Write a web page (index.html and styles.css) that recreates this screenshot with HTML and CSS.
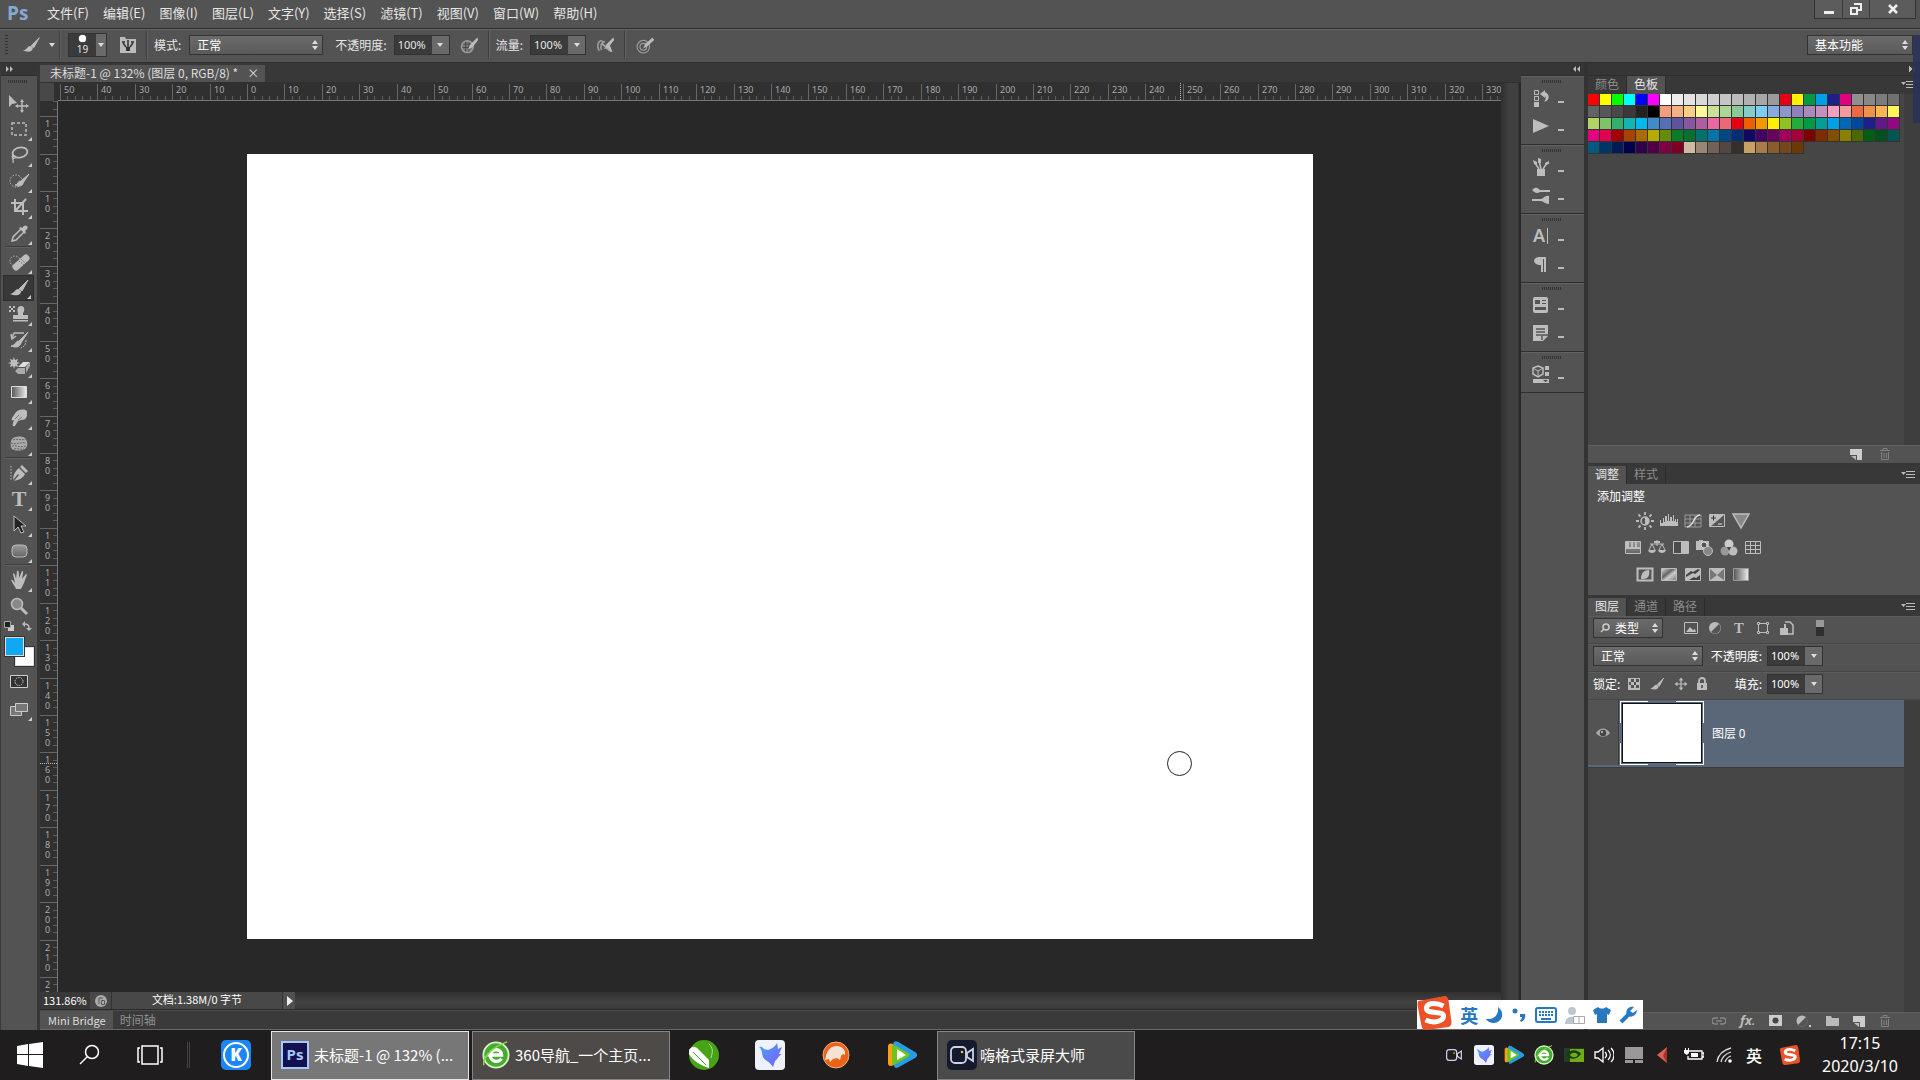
FILE: index.html
```html
<!DOCTYPE html>
<html lang="zh-CN">
<head>
<meta charset="utf-8">
<title>未标题-1 @ 132% (图层 0, RGB/8) *</title>
<link rel="stylesheet" href="styles.css">
</head>
<body>
<svg class="defs" aria-hidden="true">
  <defs>
    <linearGradient id="gLR"><stop offset="0" stop-color="#555"/><stop offset="1" stop-color="#eee"/></linearGradient>
    <linearGradient id="gTB" x2="0" y2="1"><stop offset="0" stop-color="#999"/><stop offset="1" stop-color="#666"/></linearGradient>
    <linearGradient id="gDiag" x2="1" y2="1"><stop offset="0" stop-color="#ddd"/><stop offset=".4" stop-color="#666"/><stop offset=".6" stop-color="#ccc"/><stop offset="1" stop-color="#777"/></linearGradient>
    <linearGradient id="gBird" x2="1" y2="1"><stop offset="0" stop-color="#4aa3ff"/><stop offset="1" stop-color="#7d5cf0"/></linearGradient>
  </defs>
  <symbol id="brush" viewBox="0 0 24 24"><path d="M21 4 12 13l3 2z" fill="currentColor" stroke="currentColor" stroke-linejoin="round"/><path d="M11 13c-3 0-3 4-8 5 5 2 11 2 11-3z" fill="currentColor"/></symbol>
  <symbol id="move" viewBox="0 0 24 24"><path d="M2 4v12l3-3 5-1z" fill="currentColor"/><path d="M15 10v10M10 15h10" stroke="currentColor" stroke-width="1.5"/><path d="m15 8 2 3h-4zM15 22l2-3h-4zM8 15l3-2v4zM22 15l-3-2v4z" fill="currentColor"/></symbol>
  <symbol id="arrow4" viewBox="0 0 24 24"><path d="M12 5v14M5 12h14" stroke="currentColor" stroke-width="2"/><path d="m12 1 4 5H8zM12 23l4-5H8zM1 12l5-4v8zM23 12l-5-4v8z" fill="currentColor"/></symbol>
  <symbol id="marquee" viewBox="0 0 24 24"><path d="M5 6h14v12H5z" fill="none" stroke="currentColor" stroke-width="1.5" stroke-dasharray="3 2"/></symbol>
  <symbol id="lasso" viewBox="0 0 24 24"><ellipse cx="13" cy="9.500" rx="7.500" ry="5" transform="rotate(-12 13 9.500)" fill="none" stroke="currentColor" stroke-width="1.800"/><path d="M6 12c-2 2 0 4 2 3s-1-3-2-1 1 4 0 6" fill="none" stroke="currentColor" stroke-width="1.300"/></symbol>
  <symbol id="quick" viewBox="0 0 24 24"><circle cx="9" cy="12" r="6" fill="none" stroke="currentColor" stroke-dasharray="1.500 1.500"/><path d="m22 5-8 7 2 2zM13 12c-2 0-2 4-5 4 4 2 8 1 8-2z" fill="currentColor" stroke="currentColor"/></symbol>
  <symbol id="crop" viewBox="0 0 24 24"><path d="M8 4v12h13M4 8h12v12M19 4 9 15" fill="none" stroke="currentColor" stroke-width="2"/></symbol>
  <symbol id="dropper" viewBox="0 0 24 24"><path d="m14 8-8 8-1 4 4-1 8-8" fill="none" stroke="currentColor" stroke-width="1.500"/><path d="m12 7 6 6 1-2-1-1c3-2 3-4 2-5s-3-1-5 2l-1-1z" fill="currentColor"/></symbol>
  <symbol id="heal" viewBox="0 0 24 24"><circle cx="8" cy="11" r="5" fill="none" stroke="currentColor" stroke-dasharray="1.500 1.500"/><rect x="4" y="9" width="20" height="7" rx="3" transform="rotate(-42 14 12.500)" fill="currentColor"/><path d="m12 11 5 4M14 9l4 4" stroke="#555" stroke-dasharray="1 1.500"/></symbol>
  <symbol id="stamp" viewBox="0 0 24 24"><path d="M11 11c-1-2-1-7 3-7s4 5 2 7v2h5v4H6v-4h5zM6 18h15v1.500H6z" fill="currentColor"/><path d="M2 4h2v2H2zM6 4h2v2H6zM4 6h2v2H4zM2 8h2v2H2zM6 8h2v2H6z" fill="currentColor"/></symbol>
  <symbol id="history" viewBox="0 0 24 24"><path d="m21 4-9 9 2 2zM11 13c-2 0-2 4-7 5 5 2 9 1 10-3z" fill="currentColor" stroke="currentColor"/><path d="M17 5H7l-2 5M4 6l1 5 4-3" fill="none" stroke="currentColor" stroke-width="1.500"/><path d="M19 12c0 4-1 6-5 8" stroke="currentColor" fill="none" stroke-dasharray="2 1"/></symbol>
  <symbol id="eraser" viewBox="0 0 24 24"><path d="m11 13 5-5h7l-5 5z" fill="#ddd"/><path d="M11 14h7v6h-7l-3-3zM19 13l4-5v4l-4 7z" fill="#aaa"/><path d="m7 3 1 3 3-1-1 3 3 1-3 1 1 3-3-1-1 3-1-3-3 1 1-3-3-1 3-1-1-3 3 1z" fill="currentColor"/></symbol>
  <symbol id="gradient" viewBox="0 0 24 24"><path d="M4.500 6.500h15v11h-15z" fill="url(#gLR)" stroke="#ddd"/></symbol>
  <symbol id="smudge" viewBox="0 0 24 24"><path d="M9 6c4-3 8-3 11-1v5c-1 3-3 4-6 4l-3 1-3 5c-2 1-3-1-2-3l1-3c-2 1-3 0-2-2z" fill="currentColor"/><path d="m8 13 4-4M11 14l4-3" stroke="#777"/></symbol>
  <symbol id="sponge" viewBox="0 0 24 24"><path d="M6 6c4-2 9-2 12 0 3 3 3 9 0 11-4 2-10 2-13 0-2-3-2-8 1-11z" fill="#aaa"/><path d="M6 8c4-2 8 1 13-1M4 11c4 2 8-1 15 0M5 14c4-1 9 2 14 0M7 17c4-1 6 1 10 0" fill="none" stroke="#666" stroke-dasharray="2 1"/></symbol>
  <symbol id="pen" viewBox="0 0 24 24"><path d="m15 4 6 6-2 2-6-6zM12 7l6 6c-2 4-6 6-11 7l5-6-1-1-5 6c0-5 2-9 6-12z" fill="currentColor"/><path d="M4 5v14" stroke="currentColor" stroke-dasharray="1.500 1.500"/></symbol>
  <symbol id="type" viewBox="0 0 24 24"><text x="12" y="19" text-anchor="middle" font-family="Liberation Serif, serif" font-weight="bold" font-size="22" fill="currentColor">T</text></symbol>
  <symbol id="pathsel" viewBox="0 0 24 24"><path d="M7 3v15l4-4 3 6 3-1-3-6h5z" fill="#222" stroke="#bbb"/></symbol>
  <symbol id="rrect" viewBox="0 0 24 24"><rect x="5" y="6" width="15" height="12" rx="4" fill="url(#gTB)" stroke="#bbb"/></symbol>
  <symbol id="hand" viewBox="0 0 24 24"><path d="M9 21c-1-3-4-6-5-9 1-1 2 0 4 3L6 6c1-2 2 0 3 5l1-8c2-1 2 1 2 7l3-7c2 0 1 2 0 8l4-5c2 0 0 3-1 6-1 4-3 6-4 9z" fill="currentColor"/></symbol>
  <symbol id="zoom" viewBox="0 0 24 24"><circle cx="10" cy="10" r="5.500" fill="#888" stroke="#bbb" stroke-width="1.500"/><path d="m14 14 6 6" stroke="#bbb" stroke-width="3"/></symbol>
  <symbol id="mask" viewBox="0 0 24 24"><path d="M3.500 6.500h17v12h-17z" fill="#333" stroke="#ccc"/><circle cx="12" cy="12.500" r="4" fill="none" stroke="#ccc" stroke-dasharray="1.500 1"/></symbol>
  <symbol id="screens" viewBox="0 0 24 24"><path d="M3.500 9.500h11v9h-11z" fill="#777" stroke="#ccc"/><path d="M8.500 6.500h12v8h-12z" fill="#777" stroke="#ccc"/></symbol>
  <symbol id="press" viewBox="0 0 24 24"><circle cx="10" cy="14" r="7" fill="#777" stroke="#999" stroke-width="2"/><path d="M5 11h10M4 15h11M8 8v12M12 9v11" stroke="#444"/><path d="m22 3-9 9-2 5 5-2 7-9z" fill="#bbb"/></symbol>
  <symbol id="airbrush" viewBox="0 0 24 24"><path d="M9 7C3 6 2 14 5 19M12 8c-5 0-6 7-4 10" fill="none" stroke="#999" stroke-width="2"/><path d="m22 3-9 9-2 5 5-2 7-9zM14 14l4 6h3l-3-7" fill="#bbb"/><path d="m8 10 10 9" stroke="#aaa" stroke-width="2"/></symbol>
  <symbol id="target" viewBox="0 0 24 24"><circle cx="10" cy="14" r="7.500" fill="none" stroke="#999" stroke-width="1.500"/><circle cx="10" cy="14" r="4" fill="none" stroke="#999" stroke-width="1.500"/><path d="m21 3-9 8-2 5 4-2 9-8z" fill="#bbb"/></symbol>
  <symbol id="brushpanel" viewBox="0 0 18 18"><path d="M1 1h5l1 2h10v14H1z" fill="#bbb"/><path d="M7 11h4v4H7z" fill="#333"/><path d="m4 7 3 4M9 6v5M14 7l-3 4M3 6h3M12 6h3M8 5h2" stroke="#333" stroke-width="1.500" fill="none"/></symbol>
  <symbol id="d-history" viewBox="0 0 18 18"><path d="M2.500 1.500h4v4h-4zM2.500 7.500h4v4h-4z" fill="none" stroke="currentColor"/><path d="M2 13h5v5H2z" fill="currentColor"/><path d="M8 5l5-4v2c6 3 4 9-1 10 2-2 2-5 1-6v2z" fill="currentColor"/></symbol>
  <symbol id="d-play" viewBox="0 0 18 18"><path d="M1 2v14l16-7z" fill="currentColor"/></symbol>
  <symbol id="d-brushes" viewBox="0 0 18 18"><path d="M5 11h8v7H5z" fill="currentColor"/><path d="M7 11 3 5M9 11 7 3M11 11l4-6" stroke="currentColor" stroke-width="1.500"/><path d="M1 2l4 2v3L2 6zM6 0l3 1v4H6zM13 5l4-2v3l-4 1z" fill="currentColor"/></symbol>
  <symbol id="d-presets" viewBox="0 0 18 18"><path d="M0 4c4-4 6-2 8 0h10v2H8c-3 2-5 1-8-2zM0 13h9c2 0 4-4 8-3v8c-4 0-6-3-8-3H0z" fill="currentColor"/></symbol>
  <symbol id="d-char" viewBox="0 0 18 18"><text x="1" y="15" font-family="Noto Sans, sans-serif" font-weight="600" font-size="18" fill="currentColor">A</text><path d="M15.500 1v16" stroke="currentColor"/></symbol>
  <symbol id="d-para" viewBox="0 0 18 18"><path d="M8 2h6v15h-2V4h-1v13H9v-7C0 10 0 2 8 2z" fill="currentColor"/></symbol>
  <symbol id="d-layercomp" viewBox="0 0 18 18"><rect x="1" y="1" width="15" height="16" rx="2" fill="currentColor"/><path d="M3 4h5v4H3zM10 4h4v1h-4zM10 7h4v1h-4zM3 11h11v3H3z" fill="#555"/></symbol>
  <symbol id="d-note" viewBox="0 0 18 18"><path d="M1 1h15v11l-5 5H1z" fill="currentColor"/><path d="M4 5h9M4 8h9M4 11h5M10 16v-5h6" stroke="#555" stroke-width="1.500" fill="none"/></symbol>
  <symbol id="d-3d" viewBox="0 0 18 18"><path d="m6 1 5 2v6l-5 3-5-3V3z" fill="none" stroke="currentColor" stroke-width="1.500"/><path d="m1 3 5 3 5-3M6 6v6" stroke="currentColor" fill="none"/><path d="M13 1h4v4h-4zM13 7h4v4h-4zM1 14h16v4H1z" fill="currentColor"/><path d="M11 15h5l-2.500 2z" fill="#444"/></symbol>
  <symbol id="a-sun" viewBox="0 0 18 18"><circle cx="9" cy="9" r="4" fill="#555" stroke="currentColor" stroke-width="1.500"/><path d="M9 5v8a4 4 0 0 0 0-8z" fill="currentColor"/><path d="M9 0v3M9 15v3M0 9h3M15 9h3M2.500 2.500l2 2M13.500 13.500l2 2M15.500 2.500l-2 2M2.500 15.500l2-2" stroke="currentColor" stroke-width="1.800"/></symbol>
  <symbol id="a-levels" viewBox="0 0 18 18"><path d="M0 14V8h1v3h2V6h1v4h1V4h2v5h1V2h1v7h1V5h2v4h1V3h1v6h1V7h1v3h1V7h1v7z" fill="currentColor"/></symbol>
  <symbol id="a-curves" viewBox="0 0 18 18"><path d="M1 3h16v12H1zM1 7h16M1 11h16M6 3v12M11 3v12" fill="none" stroke="#999"/><path d="M3 15c8-1 5-11 13-12" fill="none" stroke="#ddd" stroke-width="1.500"/></symbol>
  <symbol id="a-exposure" viewBox="0 0 18 18"><path d="M1.500 2.500h15v12h-15z" fill="#555" stroke="currentColor"/><path d="M2 15 16 3H2z" fill="currentColor"/><path d="M3 6h5M5.500 3.500v5" stroke="#333"/><path d="M10 12h4" stroke="#ddd"/></symbol>
  <symbol id="a-vib" viewBox="0 0 18 18"><path d="M1 2h16L9 16z" fill="#888" stroke="currentColor" stroke-width="1.500"/></symbol>
  <symbol id="a-hue" viewBox="0 0 18 18"><path d="M1.500 2.500h15v12h-15z" fill="url(#gTB)" stroke="currentColor"/><path d="M2 3h3v5H2zM7 3h2v5H7zM11 3h2v5h-2zM2 8h14v2H2z" fill="currentColor"/></symbol>
  <symbol id="a-balance" viewBox="0 0 18 18"><path d="M2 5h14M9 1v6M4 5l-3 6M4 5l3 6M14 5l-3 6M14 5l3 6" stroke="currentColor" fill="none"/><path d="M0 11h8c-1 4-7 4-8 0zM10 11h8c-1 4-7 4-8 0zM6 2h6v2H6z" fill="currentColor"/></symbol>
  <symbol id="a-bw" viewBox="0 0 18 18"><path d="M1.500 2.500h15v12h-15z" fill="#4c4c4c" stroke="currentColor"/><path d="M9 3h7v11H9z" fill="currentColor"/></symbol>
  <symbol id="a-photo" viewBox="0 0 18 18"><path d="M0 2h3V1h4v1h6v9H0z" fill="currentColor"/><circle cx="8" cy="6" r="3" fill="#555" stroke="#ddd"/><circle cx="12" cy="12" r="4.500" fill="#888" stroke="currentColor"/></symbol>
  <symbol id="a-mixer" viewBox="0 0 18 18"><circle cx="9" cy="5" r="4.500" fill="#ccc"/><circle cx="5" cy="12" r="4.500" fill="#999"/><circle cx="13" cy="12" r="4.500" fill="#bbb"/><path d="m7 8h4l-2 4z" fill="#444"/></symbol>
  <symbol id="a-lookup" viewBox="0 0 18 18"><path d="M1.500 2.500h15v12h-15zM1 6.500h16M1 10.500h16M6.500 2v13M11.500 2v13" fill="none" stroke="currentColor"/></symbol>
  <symbol id="a-invert" viewBox="0 0 18 18"><path d="M1.500 2.500h15v12h-15z" fill="#555" stroke="currentColor" stroke-width="2"/><path d="M5 13c8 1 9-5 8-9-5 0-8 3-8 9z" fill="currentColor"/></symbol>
  <symbol id="a-poster" viewBox="0 0 18 18"><path d="M1.500 2.500h15v12h-15z" fill="url(#gDiag)" stroke="currentColor"/></symbol>
  <symbol id="a-thresh" viewBox="0 0 18 18"><path d="M1.500 2.500h15v12h-15z" fill="currentColor" stroke="currentColor"/><path d="m2 9 5-4 2 1 5-3 2 1-5 4-2-1-7 4zM5 14l5-3 2 1 4-3v5z" fill="#444"/></symbol>
  <symbol id="a-select" viewBox="0 0 18 18"><path d="M1.500 2.500h15v12h-15z" fill="#777" stroke="currentColor"/><path d="m1 2 8 7 8-7zM1 15l8-6 8 6z" fill="currentColor"/></symbol>
  <symbol id="a-map" viewBox="0 0 18 18"><path d="M1.500 2.500h15v12h-15z" fill="url(#gLR)" stroke="#999"/></symbol>
  <symbol id="f-image" viewBox="0 0 16 16"><path d="M1.500 2.500h13v11h-13z" fill="none" stroke="currentColor"/><path d="m3 12 4-5 3 3 2-1 1 3z" fill="currentColor"/></symbol>
  <symbol id="f-adj" viewBox="0 0 16 16"><circle cx="8" cy="8" r="6" fill="#bbb"/><path d="M12 4a5.500 5.500 0 0 1-8 8z" fill="#555"/></symbol>
  <symbol id="f-shape" viewBox="0 0 16 16"><path d="M3.500 3.500h9v9h-9z" fill="none" stroke="currentColor"/><path d="M2.500 2.500h2v2h-2zM11.500 2.500h2v2h-2zM2.500 11.500h2v2h-2zM11.500 11.500h2v2h-2z" fill="#555" stroke="currentColor"/></symbol>
  <symbol id="f-smart" viewBox="0 0 16 16"><path d="M6 2h5l3 3v9H8" fill="none" stroke="currentColor" stroke-width="1.500"/><path d="M1 8h8v7H1zM5 4h2v5H5z" fill="currentColor"/></symbol>
  <symbol id="checker" viewBox="0 0 12 12"><path d="M0 0h12v12H0z" fill="#bbb"/><path d="M3 1h3v3H3zM8 1h3v3H8zM1 4h2v3H1zM6 4h2v3H6zM3 7h3v3H3zM8 7h3v3H8z" fill="#555"/></symbol>
  <symbol id="lock" viewBox="0 0 12 14"><path d="M3 6V4a3 3 0 0 1 6 0v2" fill="none" stroke="currentColor" stroke-width="1.800"/><path d="M1 6h10v7H1z" fill="currentColor"/><path d="M6 8v3" stroke="#444" stroke-width="1.500"/></symbol>
  <symbol id="eye" viewBox="0 0 14 10"><path d="M0 5c4-6 10-6 14 0-4 5-10 5-14 0z" fill="#aaa"/><circle cx="7" cy="5" r="3.200" fill="#444"/><circle cx="6" cy="4" r="1" fill="#ccc"/></symbol>
  <symbol id="newitem" viewBox="0 0 12 12"><path d="M0 1h12v11H7V7H0z" fill="#ccc"/><path d="M1 8h5v4z" fill="#bbb"/></symbol>
  <symbol id="trash" viewBox="0 0 12 12"><path d="M1 2.500h10M4 2V.500h4V2M2.500 4v7.500h7V4M5 5v5M7.500 5v5" fill="none" stroke="#808080"/></symbol>
  <symbol id="menuicon" viewBox="0 0 14 10"><path d="M0 2h5L2.500 5z" fill="#bbb"/><path d="M5 1.500h9M5 4.500h9M5 7.500h9" stroke="#bbb"/></symbol>
  <symbol id="updown" viewBox="0 0 6 10"><path d="M0 4h6L3 0zM0 6h6l-3 4z" fill="#ddd"/></symbol>
  <symbol id="down" viewBox="0 0 6 4"><path d="M0 0h6L3 4z" fill="#ddd"/></symbol>
  <symbol id="bird" viewBox="0 0 30 30"><rect width="30" height="30" rx="4" fill="#eef2ff"/><path d="M4 7c3-1 4 1 5 2l4 1c3-1 7-3 9-7l1 6 4-2-3 7h3c-4 2-4 5-7 7l-2 6c-2-3-4-5-6-6-3-2-5-4-5-9-1-2-1-4-3-5z" fill="url(#gBird)"/></symbol>
  <symbol id="video" viewBox="0 0 30 30"><path d="M1 6c1-3 3-3 6-1v20c-4 2-6 1-6-2z" fill="#ff9d14"/><path d="M6 4c1-4 4-3 7-1l15 9c3 2 3 4 0 6L12 27c-3 2-5 1-5-2z" fill="#279be8"/><path d="M5 7c0-2 2-2 4-1l12 7c2 1 2 3 0 4L9 24c-2 1-4 1-4-1z" fill="#6cc51c"/><path d="M10 9v11l9-5z" fill="#fff"/></symbol>
  <symbol id="e360" viewBox="0 0 30 30"><circle cx="15" cy="15" r="13.500" fill="#47ab33" stroke="#d3f5be" stroke-width="2"/><path d="M21 19c-4 5-12 3-12-4s12-8 12 0H6" fill="none" stroke="#fff" stroke-width="3.500"/><path d="M2 26C0 18 12 6 27 1" fill="none" stroke="#8edb4b" stroke-width="1.500"/></symbol>
  <symbol id="camera" viewBox="0 0 30 30"><rect x="4" y="7" width="15" height="16" rx="4" fill="none" stroke="#ccd2ea" stroke-width="1.800"/><path d="m20 13 6-4v12l-6-4z" fill="none" stroke="#ccd2ea" stroke-width="1.800"/><circle cx="15" cy="12" r="1.300" fill="#cfc73c"/></symbol>
  <symbol id="sogou" viewBox="0 0 34 34"><path d="M1 5 27 0c3 0 3 2 4 4l3 22c0 3-1 4-3 5L9 34c-3 0-4-1-5-4L0 9c0-2 0-3 1-4z" fill="#ed5127"/><path d="M26 10C16 5 8 8 9 13s17 2 17 7-9 8-18 4" fill="none" stroke="#fff" stroke-width="5"/></symbol>
</svg>

<header class="menubar">
  <span class="logo">Ps</span>
  <nav class="menus">
    <button>文件(F)</button><button>编辑(E)</button><button>图像(I)</button><button>图层(L)</button><button>文字(Y)</button><button>选择(S)</button><button>滤镜(T)</button><button>视图(V)</button><button>窗口(W)</button><button>帮助(H)</button>
  </nav>
  <div class="winbtns">
    <button aria-label="最小化"><svg width="12" height="12" viewBox="0 0 12 12"><path d="M1 8h10v3H1z" fill="#eee"/></svg></button>
    <button aria-label="还原"><svg width="12" height="12" viewBox="0 0 12 12"><path d="M4 1h7v6H8M1 5h6v6H1z" fill="none" stroke="#eee" stroke-width="2"/></svg></button>
    <button class="wide" aria-label="关闭"><svg width="12" height="12" viewBox="0 0 12 12"><path d="m2 2 8 8M10 2l-8 8" stroke="#eee" stroke-width="2.500"/></svg></button>
  </div>
</header>

<section class="options">
  <i class="vgrip"></i>
  <button class="tool-preset" aria-label="画笔工具"><svg width="22" height="22"><use href="#brush"/></svg><svg width="6" height="4"><use href="#down"/></svg></button>
  <i class="vsep"></i>
  <button class="brush-size" aria-label="画笔大小"><span class="tip"><i></i>19</span><span class="drop"><svg width="6" height="4"><use href="#down"/></svg></span></button>
  <button class="brush-panel" aria-label="画笔面板"><svg width="18" height="18"><use href="#brushpanel"/></svg></button>
  <i class="vsep"></i>
  <label for="mode">模式:</label>
  <span class="select mode"><select id="mode"><option>正常</option></select><svg width="6" height="10"><use href="#updown"/></svg></span>
  <label for="opacity">不透明度:</label>
  <span class="num"><input id="opacity" value="100%"><button aria-label="不透明度选项"><svg width="6" height="4"><use href="#down"/></svg></button></span>
  <button class="icon" aria-label="压力不透明度"><svg width="20" height="20"><use href="#press"/></svg></button>
  <i class="vsep"></i>
  <label for="flow">流量:</label>
  <span class="num"><input id="flow" value="100%"><button aria-label="流量选项"><svg width="6" height="4"><use href="#down"/></svg></button></span>
  <button class="icon" aria-label="喷枪"><svg width="20" height="20"><use href="#airbrush"/></svg></button>
  <i class="vsep"></i>
  <button class="icon" aria-label="压力大小"><svg width="20" height="20"><use href="#target"/></svg></button>
  <span class="select workspace-select"><select aria-label="工作区"><option>基本功能</option></select><svg width="6" height="10"><use href="#updown"/></svg></span>
</section>

<main class="workspace">
  <aside class="tools">
    <div class="strip"><svg width="8" height="6" viewBox="0 0 8 6"><path d="M0 0v6l3-3zM4 0v6l3-3z" fill="#bbb"/></svg></div>
    <i class="hgrip"></i>
    <div class="toolset">
      <button aria-label="移动"><svg><use href="#move"/></svg></button>
      <button class="more" aria-label="选框"><svg><use href="#marquee"/></svg></button>
      <button class="more" aria-label="套索"><svg><use href="#lasso"/></svg></button>
      <button class="more" aria-label="快速选择"><svg><use href="#quick"/></svg></button>
      <button class="more" aria-label="裁剪"><svg><use href="#crop"/></svg></button>
      <button class="more" aria-label="吸管"><svg><use href="#dropper"/></svg></button>
      <hr>
      <button class="more" aria-label="修复画笔"><svg><use href="#heal"/></svg></button>
      <button class="more active" aria-label="画笔"><svg><use href="#brush"/></svg></button>
      <button class="more" aria-label="图章"><svg><use href="#stamp"/></svg></button>
      <button class="more" aria-label="历史画笔"><svg><use href="#history"/></svg></button>
      <button class="more" aria-label="橡皮擦"><svg><use href="#eraser"/></svg></button>
      <button class="more" aria-label="渐变"><svg><use href="#gradient"/></svg></button>
      <button class="more" aria-label="涂抹"><svg><use href="#smudge"/></svg></button>
      <button class="more" aria-label="海绵"><svg><use href="#sponge"/></svg></button>
      <hr>
      <button class="more" aria-label="钢笔"><svg><use href="#pen"/></svg></button>
      <button class="more" aria-label="文字"><svg><use href="#type"/></svg></button>
      <button class="more" aria-label="路径选择"><svg><use href="#pathsel"/></svg></button>
      <button class="more" aria-label="圆角矩形"><svg><use href="#rrect"/></svg></button>
      <hr>
      <button class="more" aria-label="抓手"><svg><use href="#hand"/></svg></button>
      <button aria-label="缩放"><svg><use href="#zoom"/></svg></button>
    </div>
    <div class="swap">
      <svg width="10" height="10" viewBox="0 0 10 10"><path d="M4 4h6v6H4z" fill="#ccc"/><path d="M.500.500h6v6h-6z" fill="#222" stroke="#aaa"/></svg>
      <svg width="10" height="10" viewBox="0 0 10 10"><path d="M2 3c4 0 5 1 5 5" fill="none" stroke="#bbb" stroke-width="1.500"/><path d="M0 3l3-3v6zM4 7h6l-3 3z" fill="#bbb"/></svg>
    </div>
    <div class="colors"><i class="bg"></i><i class="fg"></i></div>
    <div class="modes">
      <button aria-label="快速蒙版"><svg><use href="#mask"/></svg></button>
      <button class="more" aria-label="屏幕模式"><svg><use href="#screens"/></svg></button>
    </div>
  </aside>

  <section class="document">
    <div class="doctabs"><button class="doctab">未标题-1 @ 132% (图层 0, RGB/8) *<span>×</span></button></div>
    <div class="corner"></div>
    <svg class="ruler-h"></svg>
    <svg class="ruler-v"></svg>
    <div class="view"><div class="artboard"><i class="cursor"></i></div></div>
    <div class="vscroll"></div>
    <div class="status">
      <input class="zoomval" aria-label="缩放比例" value="131.86%">
      <i class="doc-icon"><svg width="12" height="12" viewBox="0 0 12 12"><circle cx="6" cy="6" r="6" fill="#aaa"/><path d="M4 9V3h4M6.500 5.500h3v4h-3z" fill="none" stroke="#555"/></svg></i>
      <span class="size">文档:1.38M/0 字节</span>
      <button class="go" aria-label="文档信息"><svg width="6" height="10" viewBox="0 0 6 10"><path d="M0 0v10l6-5z" fill="#eee"/></svg></button>
    </div>
    <div class="bottomtabs"><button class="on">Mini Bridge</button><button>时间轴</button></div>
  </section>

  <aside class="dock">
    <div class="strip end"><svg width="8" height="6" viewBox="0 0 8 6"><path d="M3 0v6L0 3zM7 0v6L4 3z" fill="#bbb"/></svg></div>
    <div class="group"><i class="hgrip"></i><button aria-label="历史记录"><svg><use href="#d-history"/></svg><i></i></button><button aria-label="动作"><svg><use href="#d-play"/></svg><i></i></button></div>
    <div class="group"><i class="hgrip"></i><button aria-label="画笔预设"><svg><use href="#d-brushes"/></svg><i></i></button><button aria-label="画笔"><svg><use href="#d-presets"/></svg><i></i></button></div>
    <div class="group"><i class="hgrip"></i><button aria-label="字符"><svg><use href="#d-char"/></svg><i></i></button><button aria-label="段落"><svg><use href="#d-para"/></svg><i></i></button></div>
    <div class="group"><i class="hgrip"></i><button aria-label="图层复合"><svg><use href="#d-layercomp"/></svg><i></i></button><button aria-label="注释"><svg><use href="#d-note"/></svg><i></i></button></div>
    <div class="group"><i class="hgrip"></i><button aria-label="3D"><svg><use href="#d-3d"/></svg><i></i></button></div>
  </aside>

  <aside class="panels">
    <div class="strip end"><svg width="8" height="6" viewBox="0 0 8 6"><path d="M0 0v6l3-3zM5 0v6" fill="#bbb" stroke="#bbb"/></svg></div>
    <section class="panel swatch-panel">
      <div class="tabs"><button>颜色</button><button class="on">色板</button><svg width="14" height="10"><use href="#menuicon"/></svg></div>
      <div class="well"><div class="swatches"></div></div>
      <div class="foot"><svg width="12" height="12"><use href="#newitem"/></svg><svg width="12" height="12"><use href="#trash"/></svg></div>
    </section>
    <section class="panel">
      <div class="tabs"><button class="on">调整</button><button>样式</button><svg width="14" height="10"><use href="#menuicon"/></svg></div>
      <div class="adjust">
        <h2>添加调整</h2>
        <div class="arow inset"><svg><use href="#a-sun"/></svg><svg><use href="#a-levels"/></svg><svg><use href="#a-curves"/></svg><svg><use href="#a-exposure"/></svg><svg><use href="#a-vib"/></svg></div>
        <div class="arow"><svg><use href="#a-hue"/></svg><svg><use href="#a-balance"/></svg><svg><use href="#a-bw"/></svg><svg><use href="#a-photo"/></svg><svg><use href="#a-mixer"/></svg><svg><use href="#a-lookup"/></svg></div>
        <div class="arow inset"><svg><use href="#a-invert"/></svg><svg><use href="#a-poster"/></svg><svg><use href="#a-thresh"/></svg><svg><use href="#a-select"/></svg><svg><use href="#a-map"/></svg></div>
      </div>
    </section>
    <section class="panel layers">
      <div class="tabs"><button class="on">图层</button><button>通道</button><button>路径</button><svg width="14" height="10"><use href="#menuicon"/></svg></div>
      <div class="lrow">
        <span class="select filter"><svg class="lens" width="10" height="10" viewBox="0 0 10 10"><circle cx="6" cy="4" r="3" fill="none" stroke="#ccc" stroke-width="1.500"/><path d="M4 6 1 9" stroke="#ccc" stroke-width="1.500"/></svg><select aria-label="过滤类型"><option>类型</option></select><svg width="6" height="10"><use href="#updown"/></svg></span>
        <div class="filters"><svg><use href="#f-image"/></svg><svg><use href="#f-adj"/></svg><svg><use href="#type"/></svg><svg><use href="#f-shape"/></svg><svg><use href="#f-smart"/></svg></div>
        <i class="switch"></i>
      </div>
      <div class="lrow">
        <span class="select blend"><select aria-label="混合模式"><option>正常</option></select><svg width="6" height="10"><use href="#updown"/></svg></span>
        <label for="lop">不透明度:</label>
        <span class="num"><input id="lop" value="100%"><button aria-label="图层不透明度选项"><svg width="6" height="4"><use href="#down"/></svg></button></span>
      </div>
      <div class="lrow">
        <div class="locks"><span>锁定:</span><svg width="12" height="12"><use href="#checker"/></svg><svg width="18" height="18"><use href="#brush"/></svg><svg width="14" height="14"><use href="#arrow4"/></svg><svg width="12" height="14"><use href="#lock"/></svg></div>
        <label for="lfill">填充:</label>
        <span class="num"><input id="lfill" value="100%"><button aria-label="填充选项"><svg width="6" height="4"><use href="#down"/></svg></button></span>
      </div>
      <ul class="layerlist"><li><span class="vis"><svg width="14" height="10"><use href="#eye"/></svg></span><span class="thumb"><i></i></span><span class="lname">图层 0</span></li></ul>
      <div class="foot">
        <svg width="14" height="8" viewBox="0 0 14 8"><path d="M6 1H3a3 3 0 0 0 0 6h3M8 1h3a3 3 0 0 1 0 6H8M4 4h6" fill="none" stroke="#888" stroke-width="1.500"/></svg>
        <span class="fx">fx<small>.</small></span>
        <svg width="13" height="11" viewBox="0 0 13 11"><path d="M0 0h13v11H0z" fill="#ccc"/><circle cx="6.500" cy="5.500" r="3" fill="#444"/></svg>
        <svg width="16" height="14" viewBox="0 0 16 14"><circle cx="6" cy="7" r="5.500" fill="#bbb"/><path d="M10 3a5 5 0 0 1-8 8z" fill="#555"/><path d="M13 11h2v2h-2z" fill="#ccc"/></svg>
        <svg width="13" height="11" viewBox="0 0 13 11"><path d="M0 1h5l1 2h7v8H0z" fill="#bbb"/></svg>
        <svg width="12" height="12"><use href="#newitem"/></svg>
        <svg width="12" height="12"><use href="#trash"/></svg>
      </div>
    </section>
  </aside>
</main>

<footer class="taskbar">
  <button class="sys" aria-label="开始"><svg width="26" height="26" viewBox="0 0 26 26"><path d="M0 4 11 2v10H0zM12 2l14-2v12H12zM0 13h11v11L0 22zM12 13h14v13l-14-2z" fill="#fff"/></svg></button>
  <button class="sys" aria-label="搜索"><svg width="22" height="22" viewBox="0 0 22 22"><circle cx="13" cy="8" r="6.500" fill="none" stroke="#fff" stroke-width="1.500"/><path d="m8 13-7 7" stroke="#fff" stroke-width="1.500"/></svg></button>
  <button class="sys" aria-label="任务视图"><svg width="26" height="20" viewBox="0 0 26 20"><path d="M5 1h16v18H5zM3 3H1v14h2M23 3h2v14h-2" fill="none" stroke="#fff" stroke-width="1.500"/></svg></button>
  <i class="tsep"></i>
  <button class="app k" aria-label="K"><svg width="30" height="30" viewBox="0 0 30 30"><rect width="30" height="30" rx="5" fill="#1b86f5"/><circle cx="15" cy="15" r="12" fill="none" stroke="#fff" stroke-width="2"/><text x="15" y="21" text-anchor="middle" font-family="Open Sans, sans-serif" font-weight="800" font-size="17" fill="#fff">K</text></svg></button>
  <button class="task current"><span class="psicon">Ps</span>未标题-1 @ 132% (...</button>
  <button class="task web"><svg width="28" height="28"><use href="#e360"/></svg>360导航_一个主页...</button>
  <button class="app" aria-label="CorelDRAW"><svg width="30" height="30" viewBox="0 0 30 30"><circle cx="15" cy="15" r="15" fill="#48a317"/><path d="M0 10c3-4 6-4 9-1l11 11v8C12 26 3 20 0 14z" fill="#fff"/><path d="m4 12 13 13" stroke="#48a317"/><path d="M20 4c4 4 4 7 2 14" stroke="#b7df9b" fill="none"/></svg></button>
  <button class="app" aria-label="迅雷"><svg width="30" height="30"><use href="#bird"/></svg></button>
  <button class="app" aria-label="浏览器"><svg width="28" height="28" viewBox="0 0 28 28"><circle cx="14" cy="14" r="13" fill="#e9631b" stroke="#f6ab76"/><path d="M4 15c1-6 5-10 11-10 5 0 9 4 8 9-1-1-3-1-4 1l-1 4-3-2-4 1-3 3-1-3-4 1z" fill="#f8e2d2"/></svg></button>
  <button class="app" aria-label="腾讯视频"><svg width="30" height="30"><use href="#video"/></svg></button>
  <button class="task rec"><span class="camicon"><svg width="30" height="30"><use href="#camera"/></svg></span>嗨格式录屏大师</button>
  <div class="tray">
    <svg><use href="#camera"/></svg><svg><use href="#bird"/></svg><svg><use href="#video"/></svg><svg><use href="#e360"/></svg>
    <svg viewBox="0 0 20 20"><path d="M0 3h20v14H0z" fill="#253b26"/><path d="M6 4h14v13H6z" fill="#70ad16"/><path d="M2 10c4-6 11-6 15-1-4 6-11 6-15 1z" fill="#193c11"/><path d="M6 10c2-3 6-3 8 0-2 3-6 3-8 0z" fill="#70ad16"/></svg>
    <svg viewBox="0 0 20 20"><path d="M1 7h3l5-4v14l-5-4H1zM11 7c2 2 2 4 0 6M14 5c3 3 3 7 0 10M17 3c4 4 4 10 0 14" fill="none" stroke="#fff" stroke-width="1.300"/></svg>
    <svg viewBox="0 0 20 20"><path d="M1 2h18v12H1zM1 15h8v3H1zM11 15h8v3h-8z" fill="#999"/></svg>
    <svg viewBox="0 0 20 20"><path d="M3 10 13 2v16z" fill="#dd6355"/><path d="m9 11 4-9v16z" fill="#a3332a"/></svg>
    <svg viewBox="0 0 20 20"><path d="M5 6h13v8H4v-3M18 8h2v4h-2" fill="none" stroke="#fff" stroke-width="1.300"/><path d="M7 8h7v4H7zM0 5h5v3L3 10 0 8zM1 3h1v2H1zM4 3h1v2H4z" fill="#fff"/></svg>
    <svg viewBox="0 0 20 20"><path d="M3 17C4 10 9 5 17 3M7 17c1-5 4-8 10-10M11 17c1-3 3-5 6-6" fill="none" stroke="#ddd" stroke-width="1.300"/><circle cx="16" cy="16" r="1.800" fill="#fff"/></svg>
    <b>英</b>
    <svg><use href="#sogou"/></svg>
  </div>
  <div class="clock"><span>17:15</span><span>2020/3/10</span></div>
</footer>

<div class="ime">
  <svg class="s" width="35" height="34"><use href="#sogou"/></svg>
  <b>英</b>
  <svg width="18" height="18" viewBox="0 0 18 18"><path d="M12 1c7 5 5 15-4 16-4 0-7-2-8-4 9 1 13-5 12-12z" fill="#2878c0"/></svg>
  <svg width="14" height="18" viewBox="0 0 14 18"><circle cx="3" cy="5" r="2.500" fill="#2878c0"/><path d="M8 8h5c1 4-1 7-4 8l-1-2c2-1 2-2 2-3H8z" fill="#2878c0"/></svg>
  <svg width="22" height="16" viewBox="0 0 22 16"><rect x="1" y="1" width="20" height="14" rx="2" fill="none" stroke="#2878c0" stroke-width="2"/><path d="M4 5h14M4 8h14" stroke="#2878c0" stroke-width="2" stroke-dasharray="2 1"/><path d="M6 12h10" stroke="#2878c0" stroke-width="2"/></svg>
  <svg width="20" height="18" viewBox="0 0 20 18"><circle cx="7" cy="5" r="4" fill="#bcc7d2"/><path d="M0 18c0-9 12-10 14 0z" fill="#bcc7d2"/><path d="M8.500 10.500h11v7h-11zM14 10v8" fill="#fff" stroke="#aaa"/></svg>
  <svg width="18" height="18" viewBox="0 0 18 18"><path d="m5 1c2 2 6 2 8 0l5 3-2 5-2-1v9H4V8L2 9 0 4z" fill="#2878c0"/></svg>
  <svg width="18" height="18" viewBox="0 0 18 18"><path d="m2 16 8-8" stroke="#2878c0" stroke-width="4"/><path d="M15 1c-6-1-9 4-7 8 4 4 10 0 10-5l-4 3-3-2z" fill="#2878c0"/></svg>
</div>
<i class="edge"></i>
<script src="script.js"></script>
</body>
</html>
```
FILE: styles.css
```css
* { box-sizing: border-box; }
html, body { height: 100%; }
body {
  margin: 0; min-height: 100vh; display: flex; flex-direction: column; overflow: hidden; position: relative;
  background: #535353; color: #e6e6e6;
  font: 12px/16px "Noto Sans CJK SC", "Noto Sans", sans-serif;
}
button, input, select { font: inherit; color: inherit; background: none; border: 0; padding: 0; margin: 0; border-radius: 0; outline: 0; }
button { display: flex; align-items: center; flex: none; }
svg { display: block; flex: none; color: #bdbdbd; }
i { display: block; flex: none; font-style: normal; }
label { white-space: nowrap; }
.defs { position: absolute; width: 0; height: 0; }

.menubar { display: flex; flex: none; height: 29px; align-items: flex-start; border-bottom: 1px solid #2e2e2e; background: #535353; }
.logo { width: 40px; padding-left: 7px; font: bold 19px/26px "Open Sans", sans-serif; color: #85a9d3; }
.menus { display: flex; gap: 14px; padding-left: 7px; flex: 1; font-size: 13px; line-height: 25px; }
.winbtns { display: flex; margin-right: 4px; height: 19px; border: 1px solid #333; border-top: 0; background: #5c5c5c; }
.winbtns button { width: 27px; justify-content: center; border-left: 1px solid #3d3d3d; }
.winbtns button:first-child { border-left: 0; }
.winbtns .wide { width: 46px; }

.options { display: flex; flex: none; height: 34px; align-items: center; padding-bottom: 2px; border-top: 1px solid #666; border-bottom: 1px solid #2e2e2e; background: #535353; }
.vgrip { width: 3px; height: 20px; margin-left: 5px; background: repeating-linear-gradient(#333 0 1px, #535353 1px 3px); }
.tool-preset { gap: 7px; margin-left: 12px; }
.vsep { width: 2px; height: 28px; background: #3f3f3f; border-right: 1px solid #626262; }
.tool-preset + .vsep { margin-left: 4px; }
.brush-size { margin-left: 7px; height: 24px; border: 1px solid #333; }
.tip { display: flex; flex-direction: column; align-items: center; width: 27px; height: 22px; background: #3b3b3b; font: 10px/12px "Noto Sans", sans-serif; }
.tip i { width: 7px; height: 7px; margin: 1px; border-radius: 50%; background: #fff; box-shadow: 0 0 1px #fff; }
.drop, .num button { display: flex; align-items: center; justify-content: center; background: #6a6a6a; }
.drop { width: 10px; height: 22px; }
.brush-panel { margin: 0 9px 0 12px; }
.options label { margin-left: 6px; }
.options .num { margin-left: 7px; }
.select { position: relative; display: flex; align-items: center; height: 20px; border: 1px solid #333; background: linear-gradient(#6b6b6b, #5a5a5a); }
.select select { appearance: none; width: 100%; height: 18px; padding-left: 7px; line-height: 18px; color: #fff; }
.select > svg:last-child { position: absolute; right: 4px; }
.mode { width: 134px; margin: 0 6px 0 8px; }
.num { display: flex; height: 20px; border: 1px solid #333; background: #3b3b3b; }
.num input { width: 37px; padding-left: 3px; font: 11px/18px "Noto Sans", sans-serif; }
.num button { width: 17px; }
.icon { margin: 0 9px; }
.workspace-select { width: 106px; margin: 0 7px 0 auto; }

.workspace { display: flex; flex: 1; min-height: 0; }
.strip { display: flex; flex: none; align-items: center; height: 13px; padding: 0 5px 1px; background: #363636; border-bottom: 1px solid #2e2e2e; }
.strip.end { justify-content: flex-end; padding-right: 3px; }
.hgrip { width: 20px; height: 3px; background: repeating-linear-gradient(90deg, #333 0 1px, #535353 1px 2px); }

.tools { display: flex; flex-direction: column; flex: none; width: 40px; background: #535353; border-right: 3px solid #373737; border-left: 1px solid #3a3a3a; }
.tools > .hgrip { margin: 4px 0 7px 7px; }
.toolset, .modes { display: flex; flex-direction: column; padding-left: 2px; }
.toolset button, .modes button { position: relative; width: 31px; height: 26px; justify-content: center; }
.toolset svg, .modes svg { width: 24px; height: 24px; }
.toolset hr { width: 26px; height: 2px; margin: 0 0 1px 2px; border: 0; border-top: 1px solid #3d3d3d; border-bottom: 1px solid #616161; }
.more::after { content: ""; position: absolute; right: 2px; bottom: 1px; border: 2px solid transparent; border-right-color: #ccc; border-bottom-color: #ccc; }
.toolset .active { background: #383838; border: 1px solid #2e2e2e; }
.swap { display: flex; justify-content: space-between; padding: 2px 5px 6px 3px; }
.colors { display: grid; grid-template: 10px 9px 10px / 10px 9px 10px; padding-left: 4px; }
.colors i { border: 1px solid #ddd; box-shadow: 0 0 0 1px #333; }
.fg { grid-area: 1 / 1 / 3 / 3; background: #0fa8f5; }
.bg { grid-area: 2 / 2 / 4 / 4; background: #fff; }
.modes { gap: 2px; padding-top: 2px; }

.document { flex: 1; min-width: 0; display: grid; grid-template: 20px 18px minmax(0, 1fr) 18px 20px / 18px minmax(0, 1fr) 20px; background: #3a3a3a; }
.doctabs { grid-column: 1 / -1; display: flex; padding-top: 2px; background: #383838; border-bottom: 1px solid #303030; }
.doctab { gap: 9px; padding: 0 6px 2px 10px; background: #535353; color: #ddd; }
.corner { background: #484848; border-right: 4px solid #303030; }
.ruler-h, .ruler-v { width: 100%; height: 100%; background: #303030; font: 9px "Noto Sans", sans-serif; overflow: hidden; }
.ruler-h { grid-column: 2; border-bottom: 1px solid #777; }
.ruler-v { grid-area: 3 / 1; border-right: 1px solid #777; }
.view { grid-area: 3 / 2; display: flex; align-items: center; justify-content: center; padding: 0 0 1px 1px; overflow: hidden; background: #282828; }
.artboard { position: relative; flex: none; width: 1066px; height: 785px; background: #fff; }
.cursor { position: absolute; left: 920px; top: 597px; width: 25px; height: 25px; border: 1px solid #222; border-radius: 50%; }
.vscroll { grid-area: 2 / 3 / 5 / 4; background: linear-gradient(90deg, #303030, #404040 8px, #404040 17px, #292929 18px); }
.status { grid-area: 4 / 1 / 5 / 3; display: flex; align-items: center; background: linear-gradient(#303030, #414141 60%, #393939); border-bottom: 1px solid #2a2a2a; font-size: 11px; color: #fff; }
.zoomval { width: 50px; height: 17px; padding: 0 0 2px 3px; background: #383838; }
.doc-icon { display: flex; align-items: center; justify-content: center; width: 21px; height: 17px; background: #484848; }
.size { width: 171px; padding-bottom: 2px; text-align: center; line-height: 15px; background: #484848; border-left: 1px solid #333; }
.go { width: 13px; height: 17px; padding-left: 4px; background: #505050; border-left: 1px solid #333; }
.bottomtabs { grid-area: 5 / 1 / 6 / 4; display: flex; border-top: 1px solid #4b4b4b; border-bottom: 1px solid #666; color: #909090; }
.bottomtabs button { padding: 0 7px 1px; }
.bottomtabs .on { padding-left: 8px; background: #535353; color: #ddd; font-size: 11px; }

.dock { display: flex; flex-direction: column; flex: none; width: 67px; border-right: 4px solid #333; background: #535353; }
.group { display: flex; flex-direction: column; padding-bottom: 4px; border-bottom: 1px solid #2e2e2e; border-top: 1px solid #626262; }
.group .hgrip { margin: 3px 0 1px 21px; }
.group button { height: 28px; gap: 8px; padding-left: 11px; }
.group button svg { width: 18px; height: 18px; }
.group button > i { width: 6px; height: 2px; margin-top: 7px; background: #bbb; }

.panels { display: flex; flex-direction: column; flex: none; width: 332px; background: #535353; }
.panel { display: flex; flex-direction: column; border-bottom: 3px solid #373737; }
.tabs { display: flex; flex: none; height: 18px; background: #383838; }
.tabs button { padding: 0 7px 2px; color: #8c8c8c; border-right: 1px solid #2c2c2c; }
.tabs .on { background: #535353; color: #e6e6e6; }
.tabs svg { margin: 4px 5px 0 auto; }
.swatch-panel { flex: 0 0 390px; }
.well { flex: 1; background: #464646; border-right: 16px solid #3e3e3e; }
.swatches { display: grid; grid-template-columns: repeat(26, 12px); grid-auto-rows: 12px; }
.swatches i { border-right: 1px solid #333; border-bottom: 1px solid #333; }
.foot { display: flex; flex: none; height: 18px; align-items: center; justify-content: flex-end; gap: 17px; padding: 0 29px 2px 0; background: #535353; border-top: 1px solid #5f5f5f; }
.adjust { height: 111px; }
h2 { margin: 0; padding: 4px 9px 3px; font: inherit; color: #fff; }
.arow { display: flex; gap: 6px; padding-left: 36px; height: 27px; align-items: center; }
.arow.inset { padding-left: 48px; }
.arow svg { width: 18px; height: 18px; }
.layers { flex: 1; border-bottom: 0; }
.lrow { display: flex; flex: none; height: 28px; align-items: center; padding: 0 0 4px 5px; border-bottom: 1px solid #464646; border-top: 1px solid #5c5c5c; color: #fff; }
.filter { width: 70px; }
.lens { position: absolute; left: 6px; }
.filter select { padding-left: 21px; }
.filters { display: flex; gap: 8px; margin-left: 20px; }
.filters svg { width: 16px; height: 16px; }
.switch { width: 8px; height: 16px; margin-left: 21px; background: linear-gradient(#999 0 45%, #2f2f2f 45%); }
.blend { width: 110px; }
.lrow label { width: 59px; text-align: right; }
.lrow .num { margin-left: 5px; }
.locks { display: flex; align-items: center; gap: 8px; width: 118px; white-space: nowrap; }
.locks + label { width: 51px; }
.layerlist { flex: 1; margin: 0; padding: 0; list-style: none; background: #464646; border-right: 16px solid #3e3e3e; }
.layerlist li { display: flex; align-items: center; height: 68px; padding-bottom: 2px; background: #596779; border-bottom: 1px solid #3c3c3c; color: #fff; }
.vis { display: flex; align-items: center; justify-content: center; width: 31px; align-self: stretch; background: #535353; border-right: 1px solid #3c3c3c; }
.thumb { position: relative; width: 84px; height: 64px; margin-left: 1px; border: 1px solid #fff; }
.thumb::before { content: ""; position: absolute; inset: -1px 27px; background: #596779; }
.thumb::after { content: ""; position: absolute; inset: 21px -1px; background: #596779; }
.thumb i { position: absolute; z-index: 1; inset: 1px; border: 1px solid #111; background: #fff; }
.lname { padding-left: 8px; }
.layers .foot { gap: 14px; }
.fx { font: italic bold 13px/16px "Noto Sans", sans-serif; color: #bbb; }

.taskbar { display: flex; flex: none; height: 50px; align-items: center; background: #1f1d1d; color: #fff; font-size: 15px; }
.sys { width: 60px; height: 50px; justify-content: center; }
.tsep { width: 3px; height: 26px; margin-left: 7px; border: solid #444; border-width: 0 1px; }
.app { width: 66px; height: 50px; justify-content: center; }
.k { width: 81px; padding-left: 11px; }
.task { width: 198px; height: 49px; gap: 5px; padding-left: 9px; margin-right: 3px; border: 1px solid #858585; background: #4e4a48; white-space: nowrap; overflow: hidden; }
.task.current { border-color: #e5e5e5; background: #777; }
.task.web { margin-right: 1px; }
.psicon { width: 28px; height: 28px; border: 2px solid #a5c9f8; background: #151150; color: #a5c9f8; text-align: center; font: bold 15px/23px "Noto Sans", sans-serif; }
.rec { margin-left: 2px; gap: 3px; background: #4a4a4a; }
.camicon { background: #171a2c; border-radius: 5px; }
.tray { display: flex; align-items: center; gap: 10px; margin-left: auto; }
.tray svg { width: 20px; height: 20px; }
.tray b { width: 20px; font: 500 16px/24px "Noto Sans CJK SC", sans-serif; text-align: center; }
.tray b + svg { margin-left: 6px; }
.clock { display: flex; flex-direction: column; width: 120px; text-align: center; font: 16px/23px "Noto Sans", sans-serif; }

.ime { position: absolute; right: 277px; bottom: 51px; display: flex; align-items: center; justify-content: space-between; width: 226px; height: 29px; padding-right: 6px; background: #fff; color: #2878c0; }
.ime .s { margin-top: -4px; }
.ime b { font-size: 18px; line-height: 26px; }
.edge { position: absolute; right: 0; top: 35px; width: 7px; height: 88px; background: #2a3358; opacity: .9; }
```
FILE: script.js
```js
const palette = `
ff0000 ffff00 00ff00 00ffff 0000ff ff00ff ffffff ededed e3e3e3 d9d9d9 cfcfcf c5c5c5 bbbbbb b1b1b1 a6a6a6 9b9b9b e60012 fff100 009944 00a0e9 1d2088 e4007f 909090 888888 7c7c7c 707070
636363 575757 494949 3a3a3a 222222 000000 f19e7c f5b083 facd89 fff799 cce198 acd598 89c997 84ccc9 7ecef4 88abda 8c97cb 8f82bc aa89bd c490bf f19ec2 f29c9f ec6941 f19149 f8b551 fff45c
b3d465 80c269 32b16c 13b5b1 00b7ee 448aca 556fb5 5f52a0 8957a1 ae5da1 ea68a2 eb6877 e60012 eb6100 f39800 fff100 8fc31f 22ac38 009944 009e96 00a0e9 0068b7 00479d 1d2088 601986 920783
e4007f e5004f a40000 a84200 ac6a00 b7aa00 638c0b 097c25 007130 00736d 0075a9 004986 002e73 100964 440062 6a005f a4005b a40035 7d0000 7f2d00 834e00 8a8000 486a00 005e15 005020 005752
005982 003567 001c58 03004c 31004a 500047 7e0043 7d0022 cfbba3 998675 736357 534741 362e2b c9a063 a87c4a 8a5c2c 73461c 6a3906`.trim().split(/\s+/);
const grid = document.querySelector('.swatches');
for (const c of palette) {
  const cell = document.createElement('i');
  cell.style.background = '#' + c;
  grid.append(cell);
}

// Pixels per ten millimetres at the current zoom.
const STEP = 37.43;
const NS = 'http://www.w3.org/2000/svg';
function add(svg, tag, attrs, text) {
  const el = document.createElementNS(NS, tag);
  for (const k in attrs) el.setAttribute(k, attrs[k]);
  if (text !== undefined) el.textContent = text;
  svg.append(el);
}
function drawRulers() {
  const board = document.querySelector('.artboard').getBoundingClientRect();
  const mouse = document.querySelector('.cursor').getBoundingClientRect();
  for (const vertical of [false, true]) {
    const svg = document.querySelector(vertical ? '.ruler-v' : '.ruler-h');
    svg.replaceChildren();
    const box = svg.getBoundingClientRect();
    const origin = vertical ? board.top - box.top : board.left - box.left;
    const length = vertical ? box.height : box.width;
    const line = (p, from, color, dash) => add(svg, 'path', {
      d: vertical ? `M${from} ${p + .5}H18` : `M${p + .5} ${from}V18`,
      stroke: color, 'stroke-dasharray': dash || 'none'
    });
    for (let n = -Math.ceil(origin / STEP); origin + n * STEP < length; n++) {
      const at = Math.round(origin + n * STEP);
      line(at, vertical ? 0 : 1, '#666');
      for (let k = 1; k < 5; k++) line(Math.round(origin + (n + k / 5) * STEP), 13, '#5c5c5c');
      if (at < 0) continue;
      const label = String(Math.abs(n * 10));
      if (vertical) [...label].forEach((d, i) => {
        if (at + 4 + i * 10 < length) add(svg, 'text', { x: 5, y: at + 11 + i * 10, fill: '#aaa' }, d);
      });
      else add(svg, 'text', { x: at + 4, y: 10, fill: '#aaa' }, label);
    }
    const m = vertical ? mouse.top + mouse.height / 2 - box.top : mouse.left + mouse.width / 2 - box.left;
    line(Math.round(m), 0, '#bbb', '1 1');
  }
}
drawRulers();
addEventListener('resize', drawRulers);
```
